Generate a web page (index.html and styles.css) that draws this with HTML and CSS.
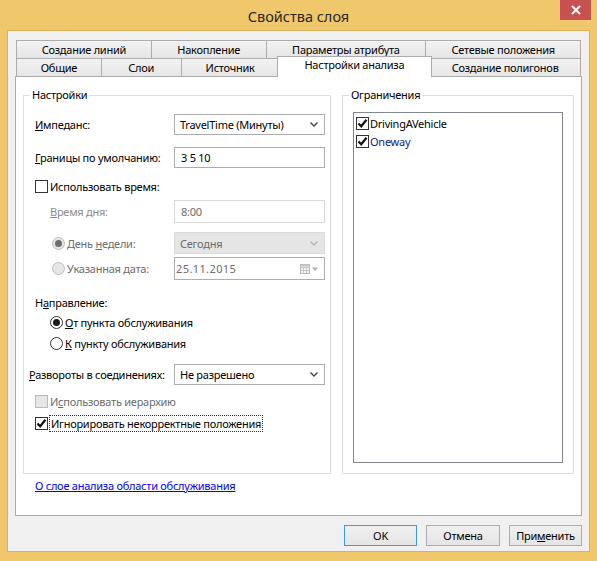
FILE: index.html
```html
<!DOCTYPE html>
<html lang="ru">
<head>
<meta charset="utf-8">
<title>Свойства слоя</title>
<link rel="stylesheet" href="styles.css">
</head>
<body>
<div class="window">
  <div class="titlebar">
    <div class="title">Свойства слоя</div>
    <div class="close">
      <svg width="10" height="10" viewBox="0 0 10 10"><path d="M1 1 L9 9 M9 1 L1 9" stroke="#fff" stroke-width="2" fill="none"/></svg>
    </div>
  </div>
  <div class="client">
    <div class="tabs">
      <div class="tabrow">
        <div class="tab w136">Создание линий</div>
        <div class="tab w116">Накопление</div>
        <div class="tab w161">Параметры атрибута</div>
        <div class="tab w156">Сетевые положения</div>
      </div>
      <div class="tabrow">
        <div class="tab w86">Общие</div>
        <div class="tab w81">Слои</div>
        <div class="tab w99">Источник</div>
        <div class="tab selected">Настройки анализа</div>
        <div class="tab w152 after-sel">Создание полигонов</div>
      </div>
    </div>
    <div class="panel">
      <div class="groups">
        <div class="group settings">
          <span class="legend">Настройки</span>
          <div class="row h21">
            <span class="lbl"><u>И</u>мпеданс:</span>
            <div class="field select">
              <span>TravelTime (Минуты)</span>
              <svg class="chev" width="8" height="5" viewBox="0 0 8 5"><path d="M0.5 0.5 L4 4 L7.5 0.5" stroke="#444" stroke-width="1.4" fill="none"/></svg>
            </div>
          </div>
          <div class="row h21 m12">
            <span class="lbl"><u>Г</u>раницы по умолчанию:</span>
            <div class="field input"><span>3 5 10</span></div>
          </div>
          <div class="row h21 m8">
            <span class="chk-line"><span class="chk"></span><span>Использовать время:</span></span>
          </div>
          <div class="row h23 m3">
            <span class="lbl dis ind15"><u>В</u>ремя дня:</span>
            <div class="field input disabled"><span>8:00</span></div>
          </div>
          <div class="row h22 m9">
            <span class="chk-line ind17 gray"><span class="radio dis-radio on"></span><span>День <u>н</u>едели:</span></span>
            <div class="field select disabled">
              <span>Сегодня</span>
              <svg class="chev" width="8" height="5" viewBox="0 0 8 5"><path d="M0.5 0.5 L4 4 L7.5 0.5" stroke="#b5b5b5" stroke-width="1.4" fill="none"/></svg>
            </div>
          </div>
          <div class="row h23 m3">
            <span class="chk-line ind17 gray"><span class="radio dis-radio"></span><span>Указанная <u>д</u>ата:</span></span>
            <div class="field input date">
              <span>25.11.2015</span>
              <span class="cal">
                <svg width="19" height="10" viewBox="0 0 19 10">
                  <rect x="0.5" y="0.5" width="9" height="9" fill="#f4f4f4" stroke="#b8b8b8"/>
                  <path d="M0.5 3.5 H9.5 M0.5 6.5 H9.5 M3.5 3.5 V9.5 M6.5 3.5 V9.5" stroke="#c8c8c8" fill="none"/>
                  <rect x="0.5" y="0.5" width="9" height="2" fill="#c4c4c4"/>
                  <path d="M12 3.5 L18 3.5 L15 7 Z" fill="#b0b0b0"/>
                </svg>
              </span>
            </div>
          </div>
          <div class="row h18 m13">
            <span class="lbl">Н<u>а</u>правление:</span>
          </div>
          <div class="row h18 m2">
            <span class="chk-line ind15"><span class="radio on"></span><span><u>О</u>т пункта обслуживания</span></span>
          </div>
          <div class="row h18 m3">
            <span class="chk-line ind15"><span class="radio"></span><span><u>К</u> пункту обслуживания</span></span>
          </div>
          <div class="row h21 m12 tight">
            <span class="lbl"><u>Р</u>азвороты в соединениях:</span>
            <div class="field select">
              <span>Не разрешено</span>
              <svg class="chev" width="8" height="5" viewBox="0 0 8 5"><path d="M0.5 0.5 L4 4 L7.5 0.5" stroke="#444" stroke-width="1.4" fill="none"/></svg>
            </div>
          </div>
          <div class="row h18 m7">
            <span class="chk-line gray"><span class="chk dis-chk"></span><span>И<u>с</u>пользовать иерархию</span></span>
          </div>
          <div class="row h18 m4">
            <span class="chk-line"><span class="chk on">
              <svg width="11" height="11" viewBox="0 0 11 11"><path d="M1.5 5.5 L4.2 8.3 L9.5 1.8" stroke="#111" stroke-width="2.2" fill="none"/></svg>
            </span><span class="focus">Игнорировать некорректные положения</span></span>
          </div>
        </div>
        <div class="group limits">
          <span class="legend">Ограничения</span>
          <div class="listbox">
            <div class="item"><span class="chk on">
              <svg width="11" height="11" viewBox="0 0 11 11"><path d="M1.5 5.5 L4.2 8.3 L9.5 1.8" stroke="#111" stroke-width="2.2" fill="none"/></svg>
            </span><span>DrivingAVehicle</span></div>
            <div class="item"><span class="chk on">
              <svg width="11" height="11" viewBox="0 0 11 11"><path d="M1.5 5.5 L4.2 8.3 L9.5 1.8" stroke="#111" stroke-width="2.2" fill="none"/></svg>
            </span><span class="blue">Oneway</span></div>
          </div>
        </div>
      </div>
      <a class="link" href="#">О слое анализа области обслуживания</a>
    </div>
    <div class="buttons">
      <div class="btn default w73">OK</div>
      <div class="btn w74">Отмена</div>
      <div class="btn w73">При<u>м</u>енить</div>
    </div>
  </div>
</div>
</body>
</html>
```
FILE: styles.css
```css
* { box-sizing: border-box; }
html, body { margin: 0; padding: 0; }
body {
  width: 597px;
  height: 561px;
  overflow: hidden;
  font-family: "Noto Sans", "Open Sans", sans-serif;
  font-size: 11px;
  letter-spacing: -0.25px;
  color: #000;
}
u { text-decoration: underline; text-underline-offset: 1px; }

.window {
  width: 597px;
  height: 561px;
  background: #f0c86b;
  display: flex;
  flex-direction: column;
}

.titlebar {
  height: 30px;
  display: grid;
  grid-template-columns: 1fr auto 1fr;
  align-items: start;
}
.title {
  grid-column: 2;
  font-size: 14.5px;
  letter-spacing: 0;
  line-height: 20px;
  margin-top: 6px;
  color: #262626;
}
.close {
  grid-column: 3;
  justify-self: end;
  margin-right: 6px;
  width: 31px;
  height: 20px;
  background: #c75050;
  display: flex;
  align-items: center;
  justify-content: center;
}

.client {
  margin-left: 7px;
  width: 583px;
  height: 522px;
  background: #f0f0f0;
  border: 1px solid #d9b25d;
  padding: 9px 7px 0 7px;
}

.tabs { padding: 0 1px; }
.tabrow { display: flex; height: 18px; }
.tab {
  height: 18px;
  border: 1px solid #acacac;
  border-bottom: none;
  background: linear-gradient(#f2f2f2, #e6e6e6);
  text-align: center;
  line-height: 17px;
  white-space: nowrap;
  margin-left: -1px;
}
.tab:first-child { margin-left: 0; }
.w136 { width: 136px; }
.w116 { width: 116px; }
.w161 { width: 161px; }
.w156 { width: 156px; }
.w86 { width: 86px; }
.w81 { width: 81px; }
.w99 { width: 99px; }
.w152 { width: 152px; }
.tab.selected {
  width: 156px;
  height: 21px;
  margin-top: -2px;
  margin-left: -3px;
  margin-right: -2px;
  background: #fff;
  position: relative;
  z-index: 1;
  line-height: 15px;
}

.panel {
  width: 567px;
  height: 440px;
  background: #fff;
  border: 1px solid #acacac;
  padding: 18px 0 0 7px;
}
.groups { display: flex; gap: 11px; }
.group {
  position: relative;
  height: 379px;
  border: 1px solid #dcdcdc;
}
.legend {
  position: absolute;
  top: -9px;
  left: 6px;
  background: #fff;
  padding: 0 2px;
  line-height: 16px;
}
.settings {
  width: 308px;
  padding: 18px 5px 0 5px;
  display: flex;
  flex-direction: column;
}
.limits { width: 232px; padding: 16px 10px 10px 10px; }

.row {
  display: flex;
  align-items: center;
  justify-content: space-between;
  padding-left: 6px;
  flex: none;
}
.row.tight { padding-left: 0; }
.h18 { height: 18px; }
.h21 { height: 21px; }
.h22 { height: 22px; }
.h23 { height: 23px; }
.m2 { margin-top: 2px; }
.m3 { margin-top: 3px; }
.m4 { margin-top: 4px; }
.m7 { margin-top: 7px; }
.m8 { margin-top: 8px; }
.m9 { margin-top: 9px; }
.m12 { margin-top: 12px; }
.m13 { margin-top: 13px; }
.ind15 { margin-left: 15px; }
.ind17 { margin-left: 17px; }

.lbl { white-space: nowrap; }
.dis { color: #8d8d8d; }
.gray { color: #6d6d6d; }

.field {
  width: 151px;
  height: 100%;
  border: 1px solid #abadb3;
  background: #fff;
  display: flex;
  align-items: center;
  justify-content: space-between;
  padding: 0 6px 0 5px;
  white-space: nowrap;
}
.field.input { padding-left: 6px; }
.field.disabled { border-color: #d9d9d9; color: #6d6d6d; }
.field.select.disabled { background: #e5e5e5; }
.field.date { padding-left: 1px; padding-right: 5px; color: #6d6d6d; letter-spacing: 0.4px; }
.cal { display: flex; }
.chev { flex: none; }

.chk-line { display: flex; align-items: center; gap: 2px; white-space: nowrap; }
.chk {
  width: 13px;
  height: 13px;
  border: 1px solid #333;
  background: #fff;
  display: flex;
  align-items: center;
  justify-content: center;
  flex: none;
}
.chk.dis-chk { border-color: #bcbcbc; background: #e6e6e6; }
.radio {
  width: 13px;
  height: 13px;
  border-radius: 50%;
  border: 1px solid #333;
  background: #fff;
  display: flex;
  align-items: center;
  justify-content: center;
  flex: none;
}
.radio.on::after {
  content: "";
  width: 7px;
  height: 7px;
  border-radius: 50%;
  background: #1a1a1a;
}
.radio.dis-radio { border-color: #bcbcbc; background: #e6e6e6; }
.radio.dis-radio.on::after { background: #6d6d6d; }
.focus { outline: 1px dotted #333; outline-offset: 0; line-height: 15px; padding: 0 1px; }

.listbox {
  width: 210px;
  height: 351px;
  border: 1px solid #828790;
  padding: 1px;
}
.item {
  height: 18px;
  display: flex;
  align-items: center;
  gap: 1px;
  padding-left: 1px;
}
.blue { color: #0a1a8a; }

.link {
  display: inline-block;
  margin: 4px 0 0 12px;
  color: #0000ff;
  text-decoration: underline;
  line-height: 15px;
}

.buttons {
  display: flex;
  justify-content: flex-end;
  gap: 9px;
  margin-top: 9px;
}
.btn {
  height: 21px;
  border: 1px solid #acacac;
  background: linear-gradient(#f0f0f0, #e5e5e5);
  text-align: center;
  line-height: 19px;
}
.btn.default { border-color: #3399ff; }
.w73 { width: 73px; }
.w74 { width: 74px; }
```
